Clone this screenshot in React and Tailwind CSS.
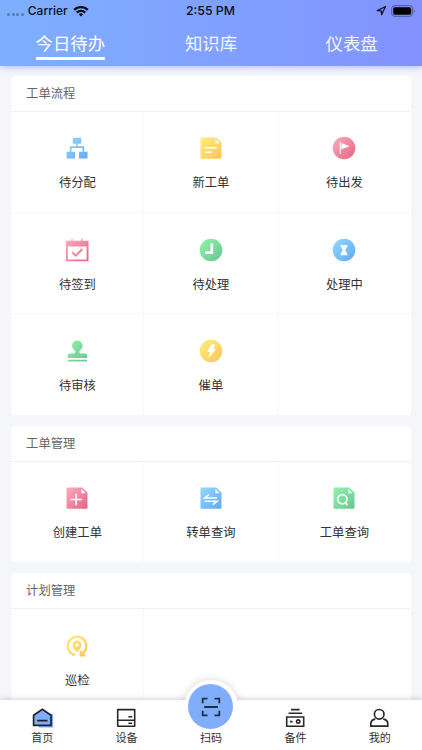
const gradients = [
  { id: "blue", from: "#8fd5ff", to: "#66adf3" },
  { id: "yellow", from: "#feea78", to: "#fcc85e" },
  { id: "pink", from: "#fda5ba", to: "#e66a86" },
  { id: "green", from: "#8ff0a9", to: "#6ac993" },
];

function GradientDefs() {
  return (
    <svg className="absolute h-0 w-0" aria-hidden="true">
      <defs>
        {gradients.map((g) => (
          <linearGradient
            key={g.id}
            id={g.id}
            gradientUnits="userSpaceOnUse"
            x1="3"
            y1="3"
            x2="21"
            y2="21"
          >
            <stop offset="0" stopColor={g.from} />
            <stop offset="1" stopColor={g.to} />
          </linearGradient>
        ))}
      </defs>
    </svg>
  );
}

function FileShape({ color }) {
  return (
    <>
      <path
        d="M2.3 1.5H17.2L22.5 6.8V22a.8.8 0 0 1-.8.8H2.3a.8.8 0 0 1-.8-.8V2.3a.8.8 0 0 1 .8-.8z"
        fill={`url(#${color})`}
      />
      <path d="M16.4 2.8L20.7 7.2H16.9a.5.5 0 0 1-.5-.5z" fill="#fff" />
    </>
  );
}

const icons = {
  assign: (
    <g fill="url(#blue)">
      <path d="M7.8 1.7h8.4v6.1H7.8zM1.6 15.8H10v6.7H1.6zM14 15.8h8.5v6.7H14z" />
      <path d="M11.2 7.8h1.6v2.5h6.4v5.5h-1.7v-3.7H6.5v3.7H4.8v-5.5h6.4z" />
    </g>
  ),
  newOrder: (
    <>
      <FileShape color="yellow" />
      <path d="M6.4 11.7h11.2M6.4 16.2h6.2" stroke="#fff" strokeWidth="1.5" />
    </>
  ),
  depart: (
    <>
      <circle cx="12" cy="12" r="11.3" fill="url(#pink)" />
      <path d="M8.3 6v11.8" stroke="#fff" strokeWidth="1.1" />
      <path d="M9.4 7L17.6 10.2 9.4 13.2z" fill="#fff" />
    </>
  ),
  signIn: (
    <>
      <path
        d="M.9 2.8h5.6V.8h1.2v2h8.6v-2h1.2v2h6V23.3H.9zM2.8 8.5v13h18.8v-13z"
        fill="url(#pink)"
        fillRule="evenodd"
      />
      <path
        d="M7.3 14.3l3.4 3.3 6.6-6.6"
        fill="none"
        stroke="url(#pink)"
        strokeWidth="2"
      />
    </>
  ),
  pending: (
    <>
      <circle cx="12" cy="12" r="11.3" fill="url(#green)" />
      <path d="M6.2 14.6h6.6V5.5" fill="none" stroke="#fff" strokeWidth="2.6" />
    </>
  ),
  working: (
    <>
      <circle cx="12" cy="12" r="11.3" fill="url(#blue)" />
      <path
        d="M8.4 7h7.2v1.4h-.8c0 2-1.1 2.8-1.8 3.7.7.9 1.8 1.7 1.8 3.7h.8v1.4H8.4v-1.4h.8c0-2 1.1-2.8 1.8-3.7-.7-.9-1.8-1.7-1.8-3.7h-.8z"
        fill="#fff"
      />
    </>
  ),
  review: (
    <g fill="url(#green)">
      <path d="M12.2 1.5a5.2 5.2 0 0 1 3.2 9.4c-1 .9-1.1 1.7-.9 2.5.2.7.8 1 1.6 1H20a2 2 0 0 1 2 2V19H2.8v-2.6a2 2 0 0 1 2-2h3.7c.8 0 1.4-.3 1.6-1 .2-.8.1-1.6-.9-2.5A5.2 5.2 0 0 1 12.2 1.5z" />
      <path d="M2.8 20.7H22v1.9H2.8z" />
    </g>
  ),
  urge: (
    <>
      <circle cx="12" cy="12" r="11.3" fill="url(#yellow)" />
      <path d="M12.2 5.6h4.2l-1.8 4.5h2.6L9.4 19.2l1.9-6.2H8z" fill="#fff" />
    </>
  ),
  create: (
    <>
      <FileShape color="pink" />
      <path d="M11.2 7.8v11.4M5.5 13.5h11.4" stroke="#fff" strokeWidth="1.7" />
    </>
  ),
  transfer: (
    <>
      <FileShape color="blue" />
      <path
        d="M18 12H5.8l4.2-3.5M5.8 15.2H18l-4.2 3.5"
        fill="none"
        stroke="#fff"
        strokeWidth="1.6"
      />
    </>
  ),
  search: (
    <>
      <FileShape color="green" />
      <circle
        cx="10.3"
        cy="13.2"
        r="4.6"
        fill="none"
        stroke="#fff"
        strokeWidth="1.7"
      />
      <path d="M12.6 16.2l2.9 2.9" stroke="#fff" strokeWidth="1.8" />
    </>
  ),
  patrol: (
    <>
      <path
        d="M10.1 21.1A9.3 9.3 0 1 1 18.6 18.6"
        fill="none"
        stroke="url(#yellow)"
        strokeWidth="2.3"
      />
      <path d="M14.6 15.8L16.6 17.6 21 17.6 19.2 19.4 20.9 22.4H14.6z" fill="url(#yellow)" />
      <path
        d="M12 6.4a4.5 4.5 0 0 1 4.5 4.5c0 2.8-2.4 5-4.5 7.3-2.1-2.3-4.5-4.5-4.5-7.3A4.5 4.5 0 0 1 12 6.4zm0 2.8a1.7 1.7 0 1 0 0 3.4 1.7 1.7 0 0 0 0-3.4z"
        fill="url(#yellow)"
        fillRule="evenodd"
      />
    </>
  ),
};

const sections = [
  {
    title: "工单流程",
    cells: 9,
    items: [
      { icon: "assign", label: "待分配" },
      { icon: "newOrder", label: "新工单" },
      { icon: "depart", label: "待出发" },
      { icon: "signIn", label: "待签到" },
      { icon: "pending", label: "待处理" },
      { icon: "working", label: "处理中" },
      { icon: "review", label: "待审核" },
      { icon: "urge", label: "催单" },
    ],
  },
  {
    title: "工单管理",
    cells: 3,
    items: [
      { icon: "create", label: "创建工单" },
      { icon: "transfer", label: "转单查询" },
      { icon: "search", label: "工单查询" },
    ],
  },
  {
    title: "计划管理",
    cells: 1,
    items: [{ icon: "patrol", label: "巡检" }],
  },
];

function StatusBar() {
  return (
    <div className="grid h-[21px] grid-cols-3 items-center pr-[6px] pl-[7px] font-['Inter'] text-[12px] leading-[21px] font-medium text-[#0c0f1c]">
      <div className="flex items-center">
        <div className="mt-[7px] mr-[4px] flex gap-[1.6px]">
          {[0, 1, 2, 3].map((n) => (
            <span key={n} className="h-[3px] w-[3px] rounded-full bg-[#5679b6]" />
          ))}
        </div>
        <span>Carrier</span>
        <svg className="ml-[5px] h-[12px] w-[16px]" viewBox="0 0 16 12">
          <g fill="none" stroke="#080b14" strokeWidth="2.3">
            <path d="M1.2 4.9a9.6 9.6 0 0 1 13.6 0" />
            <path d="M3.8 7.6a6 6 0 0 1 8.4 0" />
          </g>
          <path d="M5.8 9.3a3.3 3.3 0 0 1 4.4 0L8 11.6z" fill="#080b14" />
        </svg>
      </div>
      <span className="pr-[2px] text-center text-[12.3px]">2:55 PM</span>
      <div className="flex items-center justify-end">
        <svg className="mr-[4px] h-[11px] w-[11px]" viewBox="0 0 11 11">
          <path
            d="M1.3 5.6L9.5 1.5 5.6 9.7 5.3 5.8z"
            fill="none"
            stroke="#10152a"
            strokeWidth="1.3"
            strokeLinejoin="round"
          />
        </svg>
        <svg className="h-[12px] w-[25px]" viewBox="0 0 25 12">
          <rect x=".7" y=".7" width="21" height="10.6" rx="3" fill="none" stroke="#4c5796" />
          <rect x="2.2" y="2.2" width="18" height="7.6" rx="1.7" fill="#000" />
          <path d="M23 4.2q1.7 1.8 0 3.6z" fill="#4c5796" />
        </svg>
      </div>
    </div>
  );
}

function Header() {
  return (
    <header className="relative z-10 h-[66px] shrink-0 bg-linear-to-r from-[#7eafff] to-[#8292ff] shadow-[0_2px_6px_rgba(130,140,255,0.5)]">
      <StatusBar />
      <nav className="grid grid-cols-3 text-[17.4px] leading-[24px] text-white/90">
        <div className="flex justify-center pt-[10px]">
          <span className="h-[29px] border-b-[3px] border-white text-white">今日待办</span>
        </div>
        <div className="flex justify-center pt-[10px]">知识库</div>
        <div className="flex justify-center pt-[10px]">仪表盘</div>
      </nav>
    </header>
  );
}

function Section({ title, items, cells }) {
  return (
    <section className="overflow-hidden rounded-[5px] bg-white">
      <h2 className="h-[36px] border-b border-[#f0f1f3] pl-[15.5px] text-[12.3px] leading-[35px] text-[#666]">
        {title}
      </h2>
      <div className="grid grid-cols-3">
        {Array.from({ length: cells }, (_, i) => (
          <div
            key={i}
            className="flex h-[101.3px] flex-col items-center border-r border-b border-[#f7f8f9] pt-[24.7px] pl-px nth-[3n]:border-r-0 nth-[3n]:pl-0"
          >
            {items[i] && (
              <>
                <svg className="h-[24px] w-[24px]" viewBox="0 0 24 24">
                  {icons[items[i].icon]}
                </svg>
                <span className="mt-[13px] text-[12.3px] leading-[18px] text-[#333]">
                  {items[i].label}
                </span>
              </>
            )}
          </div>
        ))}
      </div>
    </section>
  );
}

const navIcons = {
  home: (
    <>
      <path d="M7 5.8h14.2v13.7H7z" fill="#80adf7" />
      <path d="M2 7.5L10.5 1.8 18.8 7.5V17H2z" fill="#80adf7" />
      <path
        d="M1.6 7.3L10.4 1.3 19 7.3V17.4H1.6zM5.2 12.7h10.4"
        fill="none"
        stroke="#202226"
        strokeWidth="1.7"
      />
    </>
  ),
  device: (
    <path
      d="M1.7 1.6h17v16.6h-17zM1.7 12.3h17M12.4 8.8h3.8M12.4 15.2h3.8"
      fill="none"
      stroke="#292929"
      strokeWidth="1.6"
      strokeLinejoin="round"
    />
  ),
  parts: (
    <g fill="none" stroke="#292929" strokeWidth="1.6">
      <path d="M6 1.6h8.6M3.5 5.3h13.7M1.7 9h17v9.3h-17zM5 13.6h2.6" />
      <circle cx="13.2" cy="13.6" r="1.7" />
    </g>
  ),
  mine: (
    <g fill="none" stroke="#292929" strokeWidth="1.7" strokeLinejoin="round">
      <circle cx="10.2" cy="6.3" r="4.8" />
      <path d="M6.3 11.2C3 11.6 1.8 13.6 1.8 16v2.2h17V16c0-2.4-1.3-4.4-4.6-4.8" />
    </g>
  ),
};

function NavItem({ icon, label }) {
  return (
    <div className="flex flex-col items-center pt-[8px]">
      <svg className="h-[20px] w-[21px] overflow-visible" viewBox="0 0 21 20">
        {navIcons[icon]}
      </svg>
      <span className="mt-[1px] text-[11px] leading-[17px]">{label}</span>
    </div>
  );
}

function TabBar() {
  return (
    <footer className="relative z-10 h-[50px] shrink-0 text-[#333]">
      {/* raised bump behind the scan button */}
      <div className="absolute -top-[20px] left-[184px] h-[54px] w-[54px] rounded-full bg-white shadow-[0_0_8px_rgba(0,0,0,0.16)]" />
      <div className="absolute inset-0 bg-white shadow-[0_-1px_5px_rgba(70,75,100,0.25)] [clip-path:polygon(0_-12px,185px_-12px,185px_0,237px_0,237px_-12px,100%_-12px,100%_100%,0_100%)]" />
      <nav className="relative grid h-full grid-cols-5">
        <NavItem icon="home" label="首页" />
        <NavItem icon="device" label="设备" />
        <div className="-mt-[16px] flex flex-col items-center">
          <div className="flex h-[45px] w-[45px] items-center justify-center rounded-full bg-[#80adfc]">
            <svg className="h-[20px] w-[20px]" viewBox="0 0 20 20">
              <path
                d="M1.7 6.3V1.6H6.5M13.5 1.6h4.8v4.7M18.3 13.7v4.7h-4.8M6.5 18.4H1.7v-4.7M3.2 10h13.7"
                fill="none"
                stroke="#252d3d"
                strokeWidth="1.8"
              />
            </svg>
          </div>
          <span className="text-[11px] leading-[17px]">扫码</span>
        </div>
        <NavItem icon="parts" label="备件" />
        <NavItem icon="mine" label="我的" />
      </nav>
    </footer>
  );
}

function App() {
  return (
    <div className="relative flex h-[750px] w-[422px] flex-col overflow-hidden bg-[#f5f6f9] font-['Noto_Sans_CJK_SC',sans-serif]">
      <GradientDefs />
      <Header />
      <main className="flex min-h-0 flex-1 flex-col gap-[10px] overflow-hidden pt-[9.7px] pr-[10.8px] pl-[10.6px] *:shrink-0">
        {sections.map((section) => (
          <Section key={section.title} {...section} />
        ))}
      </main>
      <TabBar />
    </div>
  );
}

export default App;
